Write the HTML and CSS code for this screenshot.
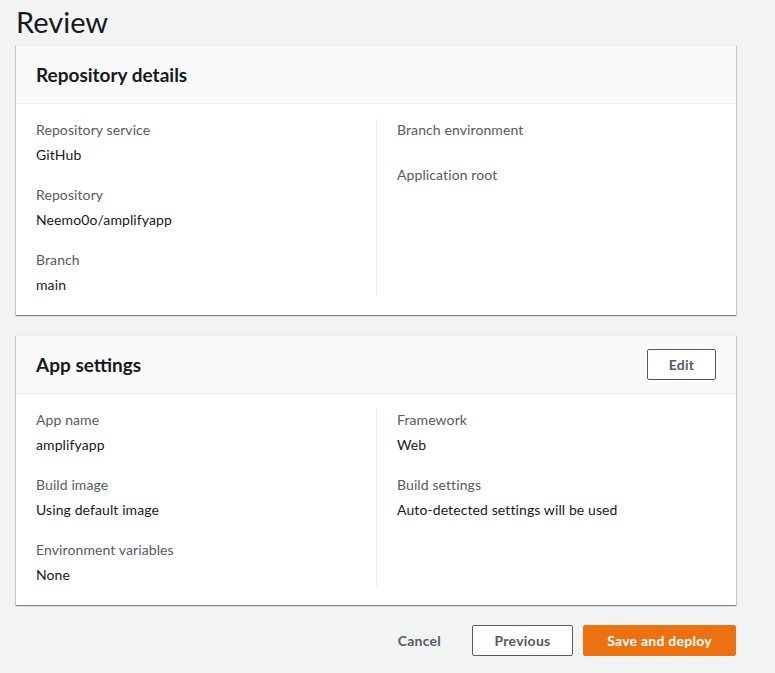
FILE: index.html
```html
<!DOCTYPE html>
<html lang="en">
<head>
<meta charset="utf-8">
<title>Review</title>
<link rel="stylesheet" href="styles.css">
</head>
<body>
<div class="page">
  <h1 class="page-title">Review</h1>

  <section class="card">
    <header class="card-header">
      <h2 class="card-title">Repository details</h2>
    </header>
    <div class="card-body">
      <div class="col">
        <div class="pair"><div class="label">Repository service</div><div class="value">GitHub</div></div>
        <div class="pair"><div class="label">Repository</div><div class="value">Neemo0o/amplifyapp</div></div>
        <div class="pair"><div class="label">Branch</div><div class="value">main</div></div>
      </div>
      <div class="col col-right">
        <div class="pair"><div class="label">Branch environment</div><div class="value"></div></div>
        <div class="pair"><div class="label">Application root</div><div class="value"></div></div>
      </div>
    </div>
  </section>

  <section class="card">
    <header class="card-header">
      <h2 class="card-title">App settings</h2>
      <button class="btn btn-normal btn-edit">Edit</button>
    </header>
    <div class="card-body">
      <div class="col">
        <div class="pair"><div class="label">App name</div><div class="value">amplifyapp</div></div>
        <div class="pair"><div class="label">Build image</div><div class="value">Using default image</div></div>
        <div class="pair"><div class="label">Environment variables</div><div class="value">None</div></div>
      </div>
      <div class="col col-right">
        <div class="pair"><div class="label">Framework</div><div class="value">Web</div></div>
        <div class="pair"><div class="label">Build settings</div><div class="value">Auto-detected settings will be used</div></div>
      </div>
    </div>
  </section>

  <div class="actions">
    <button class="btn btn-link">Cancel</button>
    <button class="btn btn-normal btn-prev">Previous</button>
    <button class="btn btn-primary">Save and deploy</button>
  </div>
</div>
</body>
</html>
```

FILE: styles.css
```css
* { box-sizing: border-box; }

html, body {
  margin: 0;
  padding: 0;
  background: #f2f3f3;
  font-family: Lato, "Liberation Sans", sans-serif;
  color: #16191f;
}

.page {
  width: 720px;
  margin-left: 16px;
}

.page-title {
  margin: 0;
  padding-top: 4px;
  height: 45px;
  font-size: 29px;
  line-height: 36px;
  font-weight: 400;
  color: #16191f;
}

.card {
  background: #fff;
  border-top: 1px solid #eaeded;
  box-shadow: 0 1px 1px 0 rgba(0, 28, 36, 0.3), 1px 1px 1px 0 rgba(0, 28, 36, 0.15), -1px 1px 1px 0 rgba(0, 28, 36, 0.15);
  margin-bottom: 20px;
}

.card-header {
  display: flex;
  align-items: center;
  justify-content: space-between;
  height: 58px;
  padding: 0 20px;
  background: #fafafa;
  border-bottom: 1px solid #eaeded;
}

.card-title {
  margin: 0;
  font-size: 19px;
  line-height: 22px;
  font-weight: 700;
  color: #16191f;
}

.card-body {
  display: grid;
  grid-template-columns: 1fr 1fr;
  padding: 15px 0 19px;
}

.col {
  padding: 0 20px;
  display: flex;
  flex-direction: column;
  gap: 18px;
}

.col-right {
  border-left: 1px solid #eaeded;
}

.pair {
  display: flex;
  flex-direction: column;
  gap: 3px;
}

.label {
  font-size: 14px;
  line-height: 22px;
  color: #545b64;
  letter-spacing: 0.1px;
}

.value {
  font-size: 14px;
  line-height: 22px;
  color: #16191f;
  letter-spacing: 0.1px;
}

.value:empty {
  height: 2px;
}

.btn {
  font-family: inherit;
  font-size: 14px;
  font-weight: 700;
  line-height: 22px;
  padding: 3px 20px;
  border-radius: 2px;
  cursor: pointer;
  letter-spacing: 0.25px;
}

.btn-normal {
  background: #fff;
  color: #545b64;
  border: 1px solid #545b64;
}

.btn-edit {
  width: 69px;
  height: 31px;
  padding: 3px 0;
}

.btn-link {
  background: transparent;
  border: 1px solid transparent;
  color: #545b64;
}

.btn-prev {
  width: 101px;
  height: 31px;
  padding: 3px 0;
}

.btn-primary {
  background: #ec7211;
  border: 1px solid #ec7211;
  color: #fff;
  width: 153px;
  height: 31px;
  padding: 3px 0;
}

.actions {
  display: flex;
  justify-content: flex-end;
  align-items: center;
  gap: 10px;
}
```
